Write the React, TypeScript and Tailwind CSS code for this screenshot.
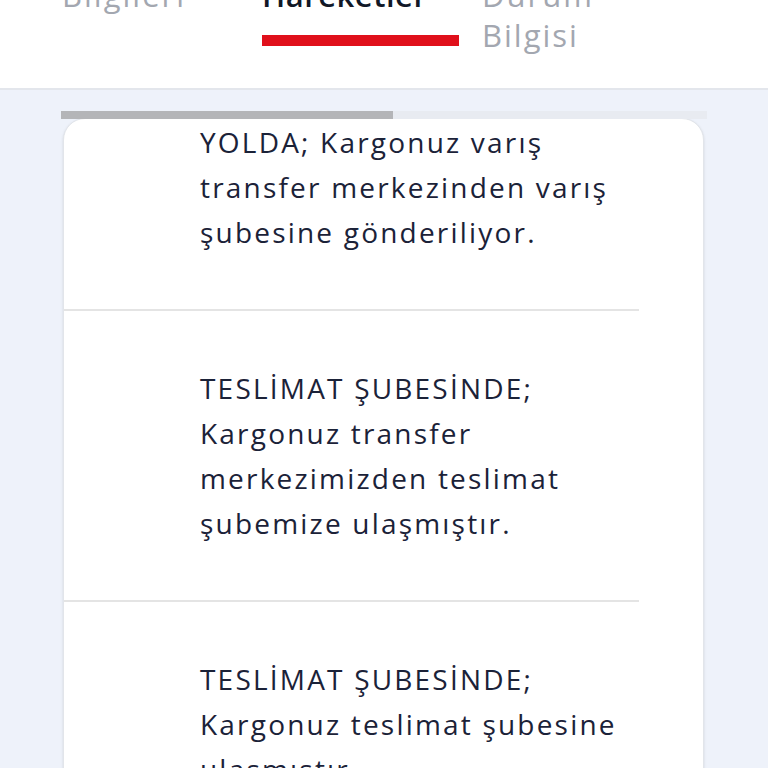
const ITEMS = [
  ['YOLDA; Kargonuz varış', 'transfer merkezinden varış', 'şubesine gönderiliyor.'],
  ['TESLİMAT ŞUBESİNDE;', 'Kargonuz transfer', 'merkezimizden teslimat', 'şubemize ulaşmıştır.'],
  ['TESLİMAT ŞUBESİNDE;', 'Kargonuz teslimat şubesine', 'ulaşmıştır.'],
]

const FONT = { fontFamily: '"Open Sans", "Noto Sans", sans-serif' }

export default function App() {
  return (
    <div className="w-[768px] h-[768px] overflow-hidden bg-[#eef2fa]" style={FONT}>
      <div className="h-[90px] overflow-hidden bg-white border-b-2 border-[#e3e6ec]">
        <div className="flex items-start -mt-[25px] pl-[62px] text-[31px] leading-[40px] tracking-[2px]">
          <div className="w-[200px] text-[#a3a7b0]">Bilgileri</div>
          <div className="w-[197px] flex flex-col">
            <span className="font-semibold text-[#111827] tracking-[0.5px]">Hareketler</span>
            <div className="mt-[20px] h-[11px] bg-[#e0101b]" />
          </div>
          <div className="ml-[23px] w-[140px] text-[#a3a7b0]">Durum Bilgisi</div>
        </div>
      </div>

      <div className="pt-[21px] px-[61px]">
        <div className="flex h-[8px]">
          <div className="w-[332px] bg-[#b4b5b8]" />
          <div className="flex-1 bg-[#e8ebf1]" />
        </div>
        <div className="ml-[2px] mr-[3px] -mt-px bg-white rounded-t-[22px] border border-[#e2e5ea] shadow-sm h-[700px]">
          {ITEMS.map((lines, i) => (
            <div key={i} className={i === 0 ? 'pt-[1px] pb-[54px]' : 'pt-[55px] pb-[54px]'}>
              <div className="pl-[136px] text-[28px] leading-[45px] tracking-[2.2px] text-[#1b2238]">
                {lines.map(l => (
                  <div key={l} className="whitespace-nowrap">{l}</div>
                ))}
              </div>
              {i < ITEMS.length - 1 && <div className="mt-[54px] -mb-[54px] mr-[64px] h-[2px] bg-[#e4e4e4]" />}
            </div>
          ))}
        </div>
      </div>
    </div>
  )
}
